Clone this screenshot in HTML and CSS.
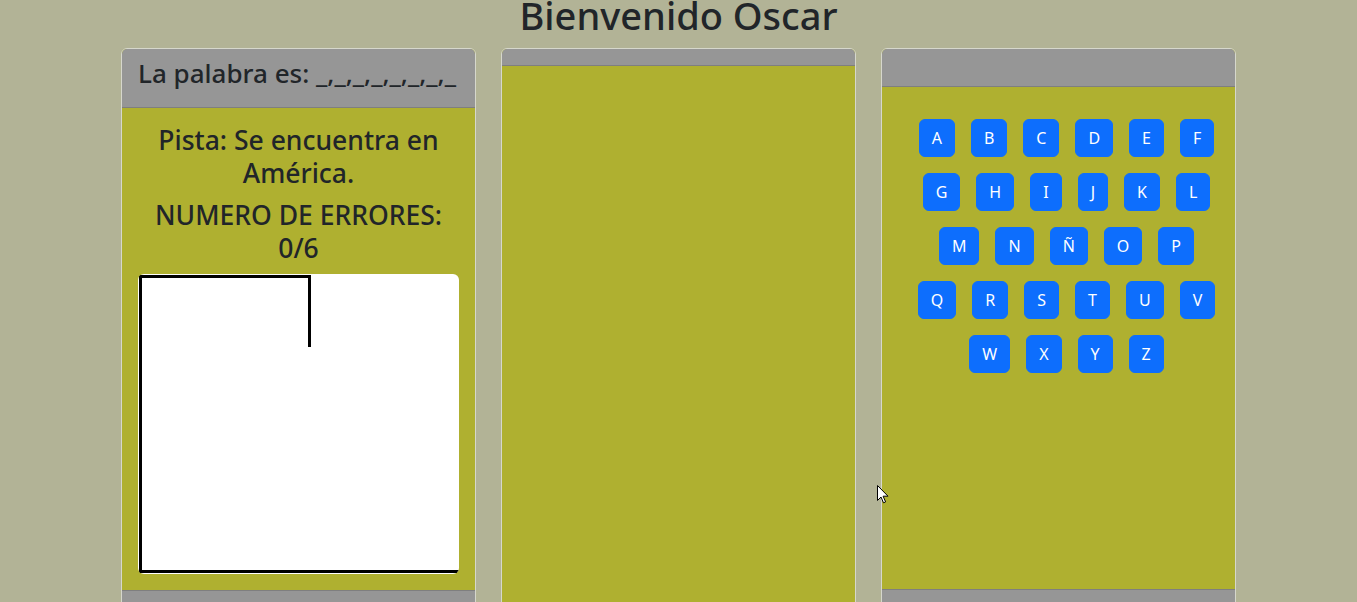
FILE: index.html
```html
<!DOCTYPE html>
<html lang="es">
<head>
<meta charset="utf-8">
<title>Ahorcado</title>
<link rel="stylesheet" href="styles.css">
</head>
<body>
<h1 class="title">Bienvenido Oscar</h1>
<div class="board">
  <div class="card">
    <div class="card-header"><h3 class="word">La palabra es: _,_,_,_,_,_,_,_</h3></div>
    <div class="card-body game-body">
      <h3 class="hint">Pista: Se encuentra en América.</h3>
      <h3 class="hint">NUMERO DE ERRORES: 0/6</h3>
      <div class="canvas">
        <svg width="321" height="300" viewBox="0 0 321 300">
          <line x1="2.5" y1="1" x2="2.5" y2="299" stroke="#000" stroke-width="3"/>
          <line x1="1" y1="2.5" x2="173" y2="2.5" stroke="#000" stroke-width="3"/>
          <line x1="171.5" y1="1" x2="171.5" y2="73" stroke="#000" stroke-width="3"/>
          <line x1="1" y1="297.5" x2="321" y2="297.5" stroke="#000" stroke-width="3"/>
        </svg>
      </div>
    </div>
    <div class="card-footer"></div>
  </div>
  <div class="card">
    <div class="card-header empty"></div>
    <div class="card-body middle-body"></div>
  </div>
  <div class="card">
    <div class="card-header keys-header"></div>
    <div class="card-body keys-body">
      <div class="key-row"><button class="key">A</button><button class="key">B</button><button class="key">C</button><button class="key">D</button><button class="key">E</button><button class="key">F</button></div>
      <div class="key-row"><button class="key">G</button><button class="key">H</button><button class="key">I</button><button class="key">J</button><button class="key">K</button><button class="key">L</button></div>
      <div class="key-row"><button class="key">M</button><button class="key">N</button><button class="key">Ñ</button><button class="key">O</button><button class="key">P</button></div>
      <div class="key-row"><button class="key">Q</button><button class="key">R</button><button class="key">S</button><button class="key">T</button><button class="key">U</button><button class="key">V</button></div>
      <div class="key-row"><button class="key">W</button><button class="key">X</button><button class="key">Y</button><button class="key">Z</button></div>
    </div>
    <div class="card-footer"></div>
  </div>
</div>
<svg class="cursor" width="12" height="19" viewBox="0 0 12 19">
  <path d="M0.5 0.5 L0.5 15.5 L4 12 L6.5 17.8 L8.6 16.9 L6.1 11.2 L11 11.2 Z" fill="#fff" stroke="#000" stroke-width="1"/>
</svg>
</body>
</html>
```
FILE: styles.css
```css
* { box-sizing: border-box; }
html, body { margin: 0; padding: 0; }
body {
  background: #b2b396;
  font-family: "Noto Sans", "Open Sans", sans-serif;
  color: #212529;
  overflow: hidden;
  position: relative;
  height: 602px;
}
.title {
  margin: 0;
  height: 48px;
  font-size: 38px;
  line-height: 30px;
  padding-top: 0;
  font-weight: 500;
  text-align: center;
}
.board {
  display: flex;
  justify-content: center;
  align-items: flex-start;
  gap: 25px;
}
.card {
  width: 355px;
  border: 1px solid #d6d7cc;
  border-radius: 6px;
  overflow: hidden;
  display: flex;
  flex-direction: column;
  background: #afb030;
}
.card-header {
  background: #969696;
  border-bottom: 1px solid #7f7f7f;
  padding: 8px 16px;
}
.card-header.empty { height: 17px; }
.card-header.keys-header { height: 38px; }
.word {
  margin: 0 0 8px;
  font-size: 26px;
  font-weight: 500;
  line-height: 33.6px;
  white-space: nowrap;
}
.card-body {
  background: #afb030;
  padding: 16px;
}
.game-body { text-align: center; }
.hint {
  margin: 0 0 8px;
  font-size: 26.5px;
  font-weight: 500;
  line-height: 33.6px;
}
.canvas {
  width: 321px;
  height: 300px;
  background: #fff;
  border-radius: 6px;
  overflow: hidden;
}
.canvas svg { display: block; }
.card-footer {
  background: #969696;
  border-top: 1px solid #7f7f7f;
  height: 30px;
}
.middle-body { height: 560px; }
.keys-body { height: 502px; }
.key-row {
  display: flex;
  justify-content: center;
  margin-top: 16px;
}
.key {
  margin: 0 0 0 16px;
  background: #0d6efd;
  color: #fff;
  border: 1px solid #0d6efd;
  border-radius: 6px;
  padding: 6px 12px;
  font-family: "Noto Sans", "Open Sans", sans-serif;
  font-size: 16px;
  line-height: 24px;
  height: 38px;
}
.cursor {
  position: absolute;
  left: 877px;
  top: 485px;
}
```
